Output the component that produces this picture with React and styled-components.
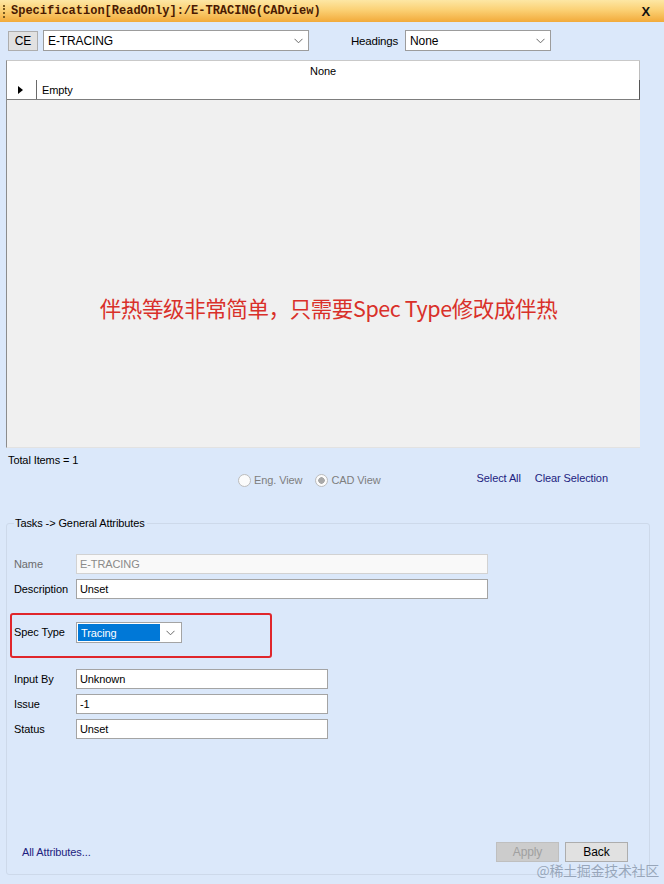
import styled, { createGlobalStyle } from "styled-components";

const GlobalStyle = createGlobalStyle`
  html, body {
    margin: 0;
    padding: 0;
    background: #dbe8fa;
  }
  * {
    box-sizing: border-box;
  }
`;

const UI_FONT = `"Liberation Sans", Arial, sans-serif`;

const ChevronIcon = () => (
  <svg width="9" height="6" viewBox="0 0 9 6">
    <path d="M0.5 0.8 L4.5 4.8 L8.5 0.8" fill="none" stroke="#6a6a6a" strokeWidth="1" />
  </svg>
);

const ComboBox = ({ width, children }) => (
  <S.Combo $width={width}>
    <S.ComboText>{children}</S.ComboText>
    <S.ComboArrow>
      <ChevronIcon />
    </S.ComboArrow>
  </S.Combo>
);

const Field = ({ label, value, width, disabled }) => (
  <S.FieldRow>
    <S.Label $disabled={disabled}>{label}</S.Label>
    <S.TextBox $width={width} $disabled={disabled}>
      {value}
    </S.TextBox>
  </S.FieldRow>
);

const Radio = ({ checked, children }) => (
  <S.RadioItem>
    <S.RadioCircle $checked={checked} />
    {children}
  </S.RadioItem>
);

const App = () => {
  return (
    <>
      <GlobalStyle />
      <S.Window>
        <S.TitleBar>
          <S.Grip />
          <S.Title>Specification[ReadOnly]:/E-TRACING(CADview)</S.Title>
          <S.Close>X</S.Close>
        </S.TitleBar>

        <S.Toolbar>
          <S.Button>CE</S.Button>
          <ComboBox width={266}>E-TRACING</ComboBox>
          <S.HeadingsLabel>Headings</S.HeadingsLabel>
          <ComboBox width={146}>None</ComboBox>
        </S.Toolbar>

        <S.Grid>
          <S.GridHeader>None</S.GridHeader>
          <S.GridRow>
            <S.RowHeader>
              <S.Triangle />
            </S.RowHeader>
            <S.Cell>Empty</S.Cell>
          </S.GridRow>
          <S.GridBody>
            <S.Note>伴热等级非常简单，只需要Spec Type修改成伴热</S.Note>
          </S.GridBody>
        </S.Grid>

        <S.TotalItems>Total Items = 1</S.TotalItems>

        <S.ViewRow>
          <S.RadioGroup>
            <Radio>Eng. View</Radio>
            <Radio checked>CAD View</Radio>
          </S.RadioGroup>
          <S.Links>
            <S.Link>Select All</S.Link>
            <S.Link>Clear Selection</S.Link>
          </S.Links>
        </S.ViewRow>

        <S.Group>
          <S.Legend>Tasks -&gt; General Attributes</S.Legend>
          <S.GroupInner>
            <Field label="Name" value="E-TRACING" width={412} disabled />
            <Field label="Description" value="Unset" width={412} />

            <S.Highlight>
              <S.Label>Spec Type</S.Label>
              <S.SpecCombo>
                <S.Selected>Tracing</S.Selected>
                <S.ComboArrow>
                  <ChevronIcon />
                </S.ComboArrow>
              </S.SpecCombo>
            </S.Highlight>

            <S.FieldStack>
              <Field label="Input By" value="Unknown" width={252} />
              <Field label="Issue" value="-1" width={252} />
              <Field label="Status" value="Unset" width={252} />
            </S.FieldStack>

            <S.Spacer />

            <S.Footer>
              <S.Link>All Attributes...</S.Link>
              <S.FooterButtons>
                <S.DialogButton $disabled>Apply</S.DialogButton>
                <S.DialogButton>Back</S.DialogButton>
              </S.FooterButtons>
            </S.Footer>
          </S.GroupInner>
          <S.Watermark>@稀土掘金技术社区</S.Watermark>
        </S.Group>
      </S.Window>
    </>
  );
};

export default App;

const Window = styled.div`
  width: 664px;
  height: 884px;
  display: flex;
  flex-direction: column;
  background: #dbe8fa;
  font-family: ${UI_FONT};
  font-size: 11px;
  letter-spacing: -0.1px;
  color: #000;
  overflow: hidden;
`;

const TitleBar = styled.div`
  height: 22px;
  flex: none;
  display: flex;
  align-items: center;
  padding: 0 14px 0 3px;
  background: linear-gradient(to bottom, #fde7a4 0%, #fbd175 45%, #f2aa3a 100%);
`;

const Grip = styled.div`
  width: 1px;
  height: 13px;
  border-left: 2px dotted #7a5a20;
  margin-right: 6px;
`;

const Title = styled.div`
  flex: 1;
  font-family: "Liberation Mono", "Courier New", monospace;
  font-weight: bold;
  font-size: 12px;
  letter-spacing: 0;
  color: #4a1a02;
`;

const Close = styled.div`
  font-family: "Liberation Sans", Arial, sans-serif;
  font-weight: bold;
  font-size: 13px;
  color: #111;
`;

const Toolbar = styled.div`
  flex: none;
  display: flex;
  align-items: center;
  height: 21px;
  margin-top: 8px;
  padding-left: 8px;
`;

const Button = styled.div`
  width: 30px;
  height: 20px;
  display: flex;
  align-items: center;
  justify-content: center;
  background: #e1e1e1;
  border: 1px solid #adadad;
  margin-right: 5px;
  font-size: 12px;
`;

const Combo = styled.div`
  width: ${({ $width }) => $width}px;
  height: 21px;
  display: flex;
  align-items: center;
  background: #fff;
  border: 1px solid #9c9c9c;
  padding-left: 4px;
`;

const ComboText = styled.div`
  flex: 1;
  font-size: 12px;
`;

const ComboArrow = styled.div`
  width: 16px;
  display: flex;
  align-items: center;
  justify-content: center;
  margin-right: 2px;
`;

const HeadingsLabel = styled.div`
  margin: 0 7px 0 42px;
  font-size: 11.5px;
  letter-spacing: -0.2px;
`;

const Grid = styled.div`
  flex: none;
  height: 388px;
  margin: 9px 24px 0 6px;
  display: flex;
  flex-direction: column;
  background: #f0f0f0;
  border-left: 1px solid #8c8c8c;
  border-top: 1px solid #c9c9c9;
  border-bottom: 1px solid #e2e2e2;
`;

const GridHeader = styled.div`
  height: 19px;
  display: flex;
  align-items: center;
  justify-content: center;
  background: #fff;
  border-right: 1px solid #bdbdbd;
`;

const GridRow = styled.div`
  height: 20px;
  display: flex;
  background: #fff;
  border-bottom: 1px solid #7d7d7d;
  border-right: 1px solid #555;
`;

const RowHeader = styled.div`
  width: 30px;
  display: flex;
  align-items: center;
  justify-content: center;
  border-right: 1px solid #6a6a6a;
`;

const Triangle = styled.div`
  width: 0;
  height: 0;
  border-top: 4.5px solid transparent;
  border-bottom: 4.5px solid transparent;
  border-left: 5px solid #000;
  margin-left: -2px;
`;

const Cell = styled.div`
  display: flex;
  align-items: center;
  padding-left: 5px;
`;

const GridBody = styled.div`
  flex: 1;
  display: flex;
  align-items: center;
  justify-content: center;
  padding-top: 68px;
`;

const Note = styled.div`
  font-family: "Noto Sans CJK SC", "Liberation Sans", sans-serif;
  font-size: 21.5px;
  letter-spacing: -0.4px;
  color: #d9302a;
  margin-left: 10px;
`;

const TotalItems = styled.div`
  flex: none;
  height: 14px;
  margin: 5px 0 0 8px;
  line-height: 14px;
`;

const ViewRow = styled.div`
  flex: none;
  height: 16px;
  margin-top: 5px;
  display: flex;
  align-items: center;
`;

const RadioGroup = styled.div`
  display: flex;
  gap: 13px;
  margin-left: 238px;
  color: #7e7e7e;
`;

const RadioItem = styled.div`
  display: flex;
  align-items: center;
  gap: 3px;
`;

const RadioCircle = styled.span`
  width: 13px;
  height: 13px;
  border-radius: 50%;
  border: 1px solid #bcbcbc;
  background: ${({ $checked }) =>
    $checked ? "radial-gradient(circle, #a8a8a8 0 3px, #fbfbfb 3.5px)" : "#fbfbfb"};
`;

const Links = styled.div`
  display: flex;
  gap: 14px;
  margin-left: 96px;
  margin-top: -4px;
`;

const Link = styled.div`
  color: #1d1d80;
`;

const Group = styled.fieldset`
  position: relative;
  flex: 1;
  margin: 28px 14px 9px 6px;
  padding: 0;
  border: 1px solid #cdd9ea;
  border-radius: 3px;
  display: flex;
  flex-direction: column;
  min-width: 0;
`;

const Legend = styled.legend`
  margin-left: 7px;
  padding: 0 2px 0 1px;
  line-height: 14px;
`;

const GroupInner = styled.div`
  flex: 1;
  display: flex;
  flex-direction: column;
  padding: 24px 21px 12px 7px;
`;

const FieldRow = styled.div`
  display: flex;
  align-items: center;
  height: 20px;
  & + & {
    margin-top: 5px;
  }
`;

const Label = styled.div`
  width: 62px;
  flex: none;
  color: ${({ $disabled }) => ($disabled ? "#6c6c6c" : "#000")};
`;

const TextBox = styled.div`
  width: ${({ $width }) => $width}px;
  height: 20px;
  display: flex;
  align-items: center;
  padding-left: 3px;
  background: ${({ $disabled }) => ($disabled ? "#f9f9f9" : "#fff")};
  border: 1px solid ${({ $disabled }) => ($disabled ? "#d2d2d2" : "#a4a4a4")};
  color: ${({ $disabled }) => ($disabled ? "#8a8a8a" : "#000")};
`;

const Highlight = styled.div`
  width: 262px;
  height: 45px;
  margin: 14px 0 0 -4px;
  padding: 7px 0 0 2px;
  display: flex;
  align-items: flex-start;
  border: 2.5px solid #e0262b;
  border-radius: 3px;

  & > ${Label} {
    line-height: 21px;
  }
`;

const SpecCombo = styled.div`
  width: 106px;
  height: 21px;
  display: flex;
  align-items: center;
  padding: 1px;
  background: #fff;
  border: 1px solid #a4a4a4;
`;

const Selected = styled.div`
  flex: 1;
  height: 17px;
  display: flex;
  align-items: center;
  padding-left: 3px;
  background: #0078d7;
  color: #fff;
  margin-right: 2px;
`;

const FieldStack = styled.div`
  display: flex;
  flex-direction: column;
  margin-top: 11px;
  & > * + * {
    margin-top: 4.5px;
  }
`;

const Spacer = styled.div`
  flex: 1;
`;

const Footer = styled.div`
  display: flex;
  align-items: center;
  justify-content: space-between;
  padding-left: 8px;
`;

const FooterButtons = styled.div`
  display: flex;
  gap: 6px;
`;

const DialogButton = styled.div`
  width: 63px;
  height: 20px;
  display: flex;
  align-items: center;
  justify-content: center;
  font-size: 12px;
  background: ${({ $disabled }) => ($disabled ? "#cccccc" : "#e1e1e1")};
  border: 1px solid ${({ $disabled }) => ($disabled ? "#bfbfbf" : "#adadad")};
  color: ${({ $disabled }) => ($disabled ? "#a0a0a0" : "#000")};
`;

const Watermark = styled.div`
  position: absolute;
  right: -10px;
  bottom: -5px;
  font-family: "Noto Sans CJK SC", sans-serif;
  font-size: 14px;
  line-height: 18px;
  letter-spacing: -0.3px;
  color: rgba(130, 145, 165, 0.75);
`;

const S = {
  Window,
  TitleBar,
  Grip,
  Title,
  Close,
  Toolbar,
  Button,
  Combo,
  ComboText,
  ComboArrow,
  HeadingsLabel,
  Grid,
  GridHeader,
  GridRow,
  RowHeader,
  Triangle,
  Cell,
  GridBody,
  Note,
  TotalItems,
  ViewRow,
  RadioGroup,
  RadioItem,
  RadioCircle,
  Links,
  Link,
  Group,
  Legend,
  GroupInner,
  FieldRow,
  Label,
  TextBox,
  Highlight,
  SpecCombo,
  Selected,
  FieldStack,
  Spacer,
  Footer,
  FooterButtons,
  DialogButton,
  Watermark,
};
